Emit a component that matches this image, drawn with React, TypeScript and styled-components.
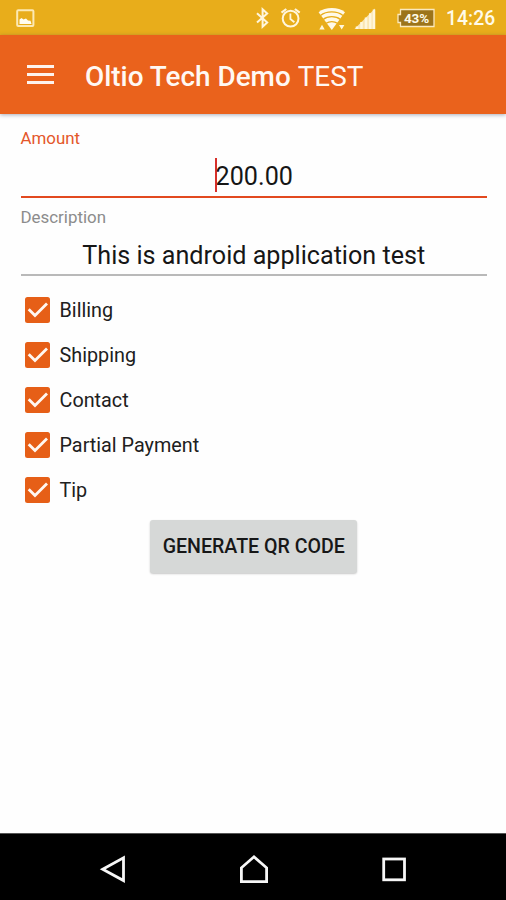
import React from "react";
import styled, { createGlobalStyle } from "styled-components";

const GlobalStyle = createGlobalStyle`
  * { box-sizing: border-box; }
  body { margin: 0; background: #fff; font-family: Roboto, "Liberation Sans", sans-serif; }
`;

const Screen = styled.div`
  width: 506px;
  height: 900px;
  display: flex;
  flex-direction: column;
  background: #fefefe;
  overflow: hidden;
`;

const StatusBar = styled.header`
  height: 35px;
  flex: none;
  display: flex;
  justify-content: space-between;
  background: #e8ad1b;
  color: #fffbe9;
`;

const StatusGlyphs = styled.svg`
  display: block;
  flex: none;
`;

const StatusRight = styled.div`
  display: flex;
  height: 35px;
`;

const Battery = styled.div`
  position: relative;
  width: 36px;
  height: 20px;
  margin: 8px 0 0 20px;
`;

const BatteryShape = styled.svg`
  display: block;
`;

const BatteryLevel = styled.span`
  position: absolute;
  left: 6px;
  top: 0;
  width: 29px;
  text-align: center;
  font-size: 13.5px;
  line-height: 20px;
  font-weight: 700;
  letter-spacing: -0.2px;
`;

const Clock = styled.time`
  width: 61px;
  padding-left: 1px;
  margin-left: 13px;
  font-size: 19.3px;
  line-height: 37px;
  font-weight: 500;
  letter-spacing: 0.1px;
  white-space: nowrap;
`;

const AppBar = styled.div`
  height: 79px;
  flex: none;
  display: flex;
  align-items: center;
  background: #ea621c;
  box-shadow: 0 1px 4px rgba(40, 50, 80, 0.4);
`;

const MenuButton = styled.div`
  width: 27px;
  height: 19px;
  margin: 0 31.5px 0 26.5px;
  display: flex;
  flex-direction: column;
  justify-content: space-between;
`;

const MenuLine = styled.span`
  height: 3.4px;
  background: #fdf3ee;
`;

const Title = styled.h1`
  margin: 4px 0 0;
  font-size: 27.9px;
  line-height: 34px;
  font-weight: 500;
  color: #fff8f3;
  white-space: nowrap;
`;

const TitleSuffix = styled.span`
  font-weight: 400;
`;

const Form = styled.main`
  flex: 1;
  display: flex;
  flex-direction: column;
  padding: 13px 19px 0 20.5px;
`;

const Field = styled.label<{ $active?: boolean }>`
  display: flex;
  flex-direction: column;
  height: ${(p) => (p.$active ? 71 : 70)}px;
  margin-bottom: ${(p) => (p.$active ? 8 : 9)}px;
  border-bottom: 2px solid ${(p) => (p.$active ? "#e2491f" : "#b9b9b9")};
`;

const FieldLabel = styled.span<{ $active?: boolean }>`
  font-size: 16.9px;
  line-height: 22px;
  color: ${(p) => (p.$active ? "#e4572b" : "#8c8c8c")};
`;

const FieldValue = styled.span`
  align-self: center;
  display: flex;
  align-items: center;
  height: 32px;
  margin-top: 11px;
  font-size: 25.15px;
  color: #161616;
  white-space: nowrap;
`;

const Caret = styled.span`
  width: 2px;
  height: 34px;
  margin: -2px -1px 0 0;
  background: #d7302a;
`;

const Options = styled.div`
  display: flex;
  flex-direction: column;
  margin-top: 2.5px;
`;

const Option = styled.label`
  height: 45px;
  display: flex;
  align-items: center;
  padding-left: 4px;
  font-size: 19.8px;
  color: #202020;
`;

const Box = styled.span`
  width: 25.5px;
  height: 25.5px;
  margin-right: 9.5px;
  flex: none;
  border-radius: 2.5px;
  background: #e65f17;
`;

const GenerateButton = styled.button`
  align-self: center;
  width: 207px;
  height: 53px;
  margin-top: 7px;
  padding: 0;
  border: 0;
  border-radius: 3px;
  background: #d6d8d7;
  box-shadow: 0 1px 2px rgba(0, 0, 0, 0.22);
  color: #171717;
  font-family: inherit;
  font-size: 19.6px;
  font-weight: 500;
  white-space: nowrap;
`;

const NavBar = styled.nav`
  height: 67px;
  flex: none;
  display: flex;
  justify-content: space-between;
  padding: 20px 98px 0 99px;
  background: #000;
  border-top: 1px solid #555;
`;

const NavIcon = styled.svg`
  width: 30px;
  height: 32px;
  fill: none;
  stroke: #f7f7f7;
  stroke-width: 2.8;
`;

const options = ["Billing", "Shipping", "Contact", "Partial Payment", "Tip"];

export default function App() {
  return (
    <>
      <GlobalStyle />
      <Screen>
        <StatusBar>
          <StatusGlyphs width="50" height="35" viewBox="0 0 50 35">
            <rect x="17.2" y="10.2" width="16.2" height="15.8" rx="1" fill="none" stroke="#fce9b4" strokeWidth="2" />
            <path d="M19.5 24v-4.5l2-1.5 2 1.5 2.5-1 2 2 2.5.2 1 3.3z" fill="#fffdf2" />
          </StatusGlyphs>
          <StatusRight>
            <StatusGlyphs width="126" height="35" viewBox="250 0 126 35" fill="none" stroke="#fff6dc">
              <path d="M257 13.3l10.2 9.2-4.6 4.2V9.2l4.6 4.2-10.2 9.2" strokeWidth="2" />
              <circle cx="290.6" cy="18.6" r="7.9" strokeWidth="2" />
              <path d="M290.4 13.5v5.5l4 3.2" strokeWidth="1.8" />
              <path d="M281.5 12.7l4.8-3.7M299.7 12.7L294.9 9" strokeWidth="2.2" />
              <path d="M318.6 12.2C325.2 6.6 338.4 6.6 345 12.2L331.8 30z" fill="#fff9e8" stroke="none" />
              <path d="M320.5 15.4C326.5 10.6 337 10.6 343 15.4M323.2 19.4C327.6 15.8 336 15.8 340.4 19.4M326.2 23.2C329.2 21 334.4 21 337.4 23.2" stroke="#e8ad1b" strokeWidth="1.3" />
              <path d="M319.3 29.5l2.7-4.7 2.7 4.7zM339 25h5.4l-2.7 4.6z" fill="#fff6dc" stroke="none" />
              <path d="M354.5 29L375 8.5V29z" fill="#fae5b2" stroke="none" />
              <path d="M357 29v-2.5M361.5 29v-7M366 29V17.5M370.2 29V13.3M374 29V9.5" strokeWidth="2.5" />
            </StatusGlyphs>
            <Battery>
              <BatteryShape width="40" height="20" viewBox="0 0 40 20">
                <path d="M4.5 1.5H38v17H4.5v-4H2v-8h2.5z" fill="#9c741a" stroke="#fbe9bd" strokeWidth="1.3" />
              </BatteryShape>
              <BatteryLevel>43%</BatteryLevel>
            </Battery>
            <Clock>14:26</Clock>
          </StatusRight>
        </StatusBar>
        <AppBar>
          <MenuButton>
            <MenuLine />
            <MenuLine />
            <MenuLine />
          </MenuButton>
          <Title>
            Oltio Tech Demo <TitleSuffix>TEST</TitleSuffix>
          </Title>
        </AppBar>
        <Form>
          <Field $active>
            <FieldLabel $active>Amount</FieldLabel>
            <FieldValue>
              <Caret />
              200.00
            </FieldValue>
          </Field>
          <Field>
            <FieldLabel>Description</FieldLabel>
            <FieldValue>This is android application test</FieldValue>
          </Field>
          <Options>
            {options.map((name) => (
              <Option key={name}>
                <Box>
                  <svg width="25.5" height="25.5" viewBox="0 0 25.5 25.5" fill="none" stroke="#fff8f2" strokeWidth="2.8">
                    <path d="M3.7 12.2l6.3 6.3L22 6.5" />
                  </svg>
                </Box>
                {name}
              </Option>
            ))}
          </Options>
          <GenerateButton>GENERATE QR CODE</GenerateButton>
        </Form>
        <NavBar>
          <NavIcon viewBox="0 0 30 32">
            <path d="M3.7 15.2L24.5 3.8v22.8z" />
          </NavIcon>
          <NavIcon viewBox="0 0 30 32">
            <path d="M2.4 27.6V13.8L15 2.8l12.6 11v13.8z" />
          </NavIcon>
          <NavIcon viewBox="0 0 30 32">
            <rect x="5.7" y="5" width="20.8" height="20.8" />
          </NavIcon>
        </NavBar>
      </Screen>
    </>
  );
}
